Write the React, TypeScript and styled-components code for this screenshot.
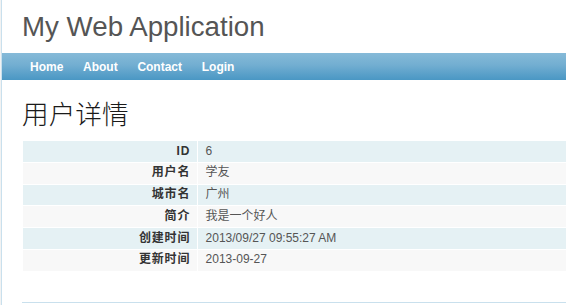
import styled, { createGlobalStyle } from "styled-components"

const GlobalStyle = createGlobalStyle`
  html, body {
    margin: 0;
    padding: 0;
    overflow: hidden;
  }
  body {
    background: #f2f2f2;
    color: #555;
    font: normal 13.33px "Liberation Sans", Arial, "Noto Sans CJK SC", sans-serif;
  }
`

const Style = {
  Page: styled.div`
    width: 950px;
    margin: 0 0 0 1px;
    background: white;
    border-left: 1px solid #c9e0ed;
  `,
  Logo: styled.div`
    padding: 11px 20px 10px;
    font-size: 27.7px;
    line-height: 32px;
    color: #555;
  `,
  MainMenu: styled.ul`
    display: flex;
    gap: 3.7px;
    height: 27px;
    box-sizing: border-box;
    margin: 0;
    padding: 7px 20px 0;
    list-style: none;
    background: linear-gradient(to bottom, #86bad8 0%, #72aed1 45%, #4a97c4 100%);
  `,
  MenuLink: styled.a`
    display: block;
    padding: 0 8px;
    color: #ffffff;
    font-size: 12px;
    line-height: 15px;
    font-weight: bold;
    text-decoration: none;
  `,
  Content: styled.div`
    padding: 20px;
  `,
  Title: styled.h1`
    margin: 0 0 13.3px;
    font-family: "Noto Sans CJK SC", sans-serif;
    font-size: 26.67px;
    line-height: 26.67px;
    font-weight: 300;
    color: #1a1a1a;
  `,
  DetailView: styled.table`
    width: 100%;
    border-collapse: collapse;
    background: white;
    margin: 0;
  `,
  Row: styled.tr<{ $odd: boolean }>`
    background: ${(p) => (p.$odd ? "#e5f1f4" : "#f8f8f8")};
  `,
  Label: styled.th`
    width: 160px;
    padding: 3.6px 7.2px;
    border: 1px solid white;
    text-align: right;
    vertical-align: top;
    font-size: 12px;
    line-height: 13.6px;
    font-weight: bold;
    letter-spacing: 0.8px;
    color: #333;
  `,
  Value: styled.td`
    padding: 3.6px 7.2px;
    border: 1px solid white;
    text-align: left;
    vertical-align: top;
    font-size: 12px;
    line-height: 13.6px;
    color: #555;
  `,
  Footer: styled.div`
    margin: 10px 20px 0;
    padding: 10px;
    height: 20px;
    border-top: 1px solid #c9e0ed;
  `,
}

const menu = ["Home", "About", "Contact", "Login"]

const details = [
  { label: "ID", value: "6" },
  { label: "用户名", value: "学友" },
  { label: "城市名", value: "广州" },
  { label: "简介", value: "我是一个好人" },
  { label: "创建时间", value: "2013/09/27 09:55:27 AM" },
  { label: "更新时间", value: "2013-09-27" },
]

export default function App() {
  return (
    <>
      <GlobalStyle />
      <Style.Page>
        <Style.Logo>My Web Application</Style.Logo>
        <Style.MainMenu>
          {menu.map((item) => (
            <li key={item}>
              <Style.MenuLink href="#">{item}</Style.MenuLink>
            </li>
          ))}
        </Style.MainMenu>
        <Style.Content>
          <Style.Title>用户详情</Style.Title>
          <Style.DetailView>
            <tbody>
              {details.map((row, i) => (
                <Style.Row key={row.label} $odd={i % 2 === 0}>
                  <Style.Label>{row.label}</Style.Label>
                  <Style.Value>{row.value}</Style.Value>
                </Style.Row>
              ))}
            </tbody>
          </Style.DetailView>
        </Style.Content>
        <Style.Footer />
      </Style.Page>
    </>
  )
}
